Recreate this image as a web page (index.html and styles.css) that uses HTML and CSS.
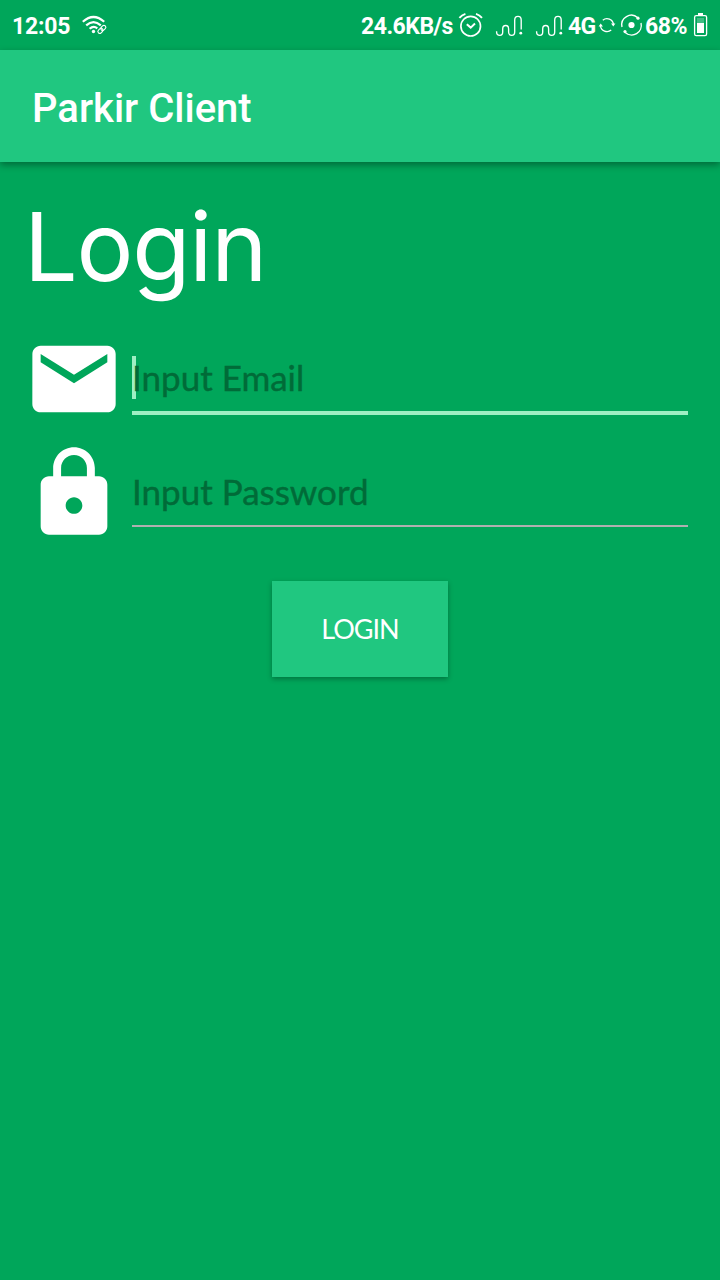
FILE: index.html
```html
<!DOCTYPE html>
<html lang="en">
<head>
<meta charset="utf-8">
<title>Parkir Client</title>
<link rel="stylesheet" href="styles.css">
</head>
<body>
<div class="status">
  <span class="time">12:05</span>
  <svg class="icon" width="30" height="50" viewBox="80 0 30 50" fill="none" stroke="#fff">
    <path d="M82.800 21.800Q93.500 12.200 104.200 21.800M86.200 25.400Q93.500 19 100.800 25.400M89.600 28.800Q93.500 25.200 97.300 28.300" stroke-width="2.2"/>
    <circle cx="93.5" cy="31.5" r="1.7" fill="#fff" stroke="none"/>
    <g transform="rotate(-45 101.8 29.3)" stroke-width="1.1"><rect x="97" y="27.5" width="5.6" height="3.8" rx="1.9"/><rect x="101" y="27.5" width="5.6" height="3.8" rx="1.9"/></g>
  </svg>
  <div class="right">
    <span class="rate">24.6KB/s</span>
    <svg class="icon" width="32" height="50" viewBox="458 0 32 50" fill="none" stroke="#fff" stroke-width="1.7">
      <circle cx="470.7" cy="26.2" r="9.8"/><path d="M466.8 24.2L470.7 27.6L475 23.5" stroke-width="2"/><path d="M459.4 17.8Q461.8 15 465.4 13.9M476 13.9Q479.6 15 482 17.8" stroke-width="1.9"/>
    </svg>
    <svg class="icon" width="40" height="50" viewBox="490 0 40 50" fill="none" stroke="#fff" stroke-width="1.35">
      <path d="M496.6 31.3V32Q496.6 35.4 499.8 35.4Q502.7 35.4 502.7 32V29Q502.7 25.5 505.7 25.5Q508.6 25.5 508.6 29V32Q508.6 35.4 511.7 35.4Q514.7 35.4 514.7 32V20Q514.7 16.4 518 16.4Q521.2 16.4 521.2 20V29.4"/><circle cx="520.8" cy="33.2" r="1.4" fill="#fff" stroke="none"/>
    </svg>
    <svg class="icon" width="37" height="50" viewBox="490 0 37 50" fill="none" stroke="#fff" stroke-width="1.35">
      <path d="M496.6 31.3V32Q496.6 35.4 499.8 35.4Q502.7 35.4 502.7 32V29Q502.7 25.5 505.7 25.5Q508.6 25.5 508.6 29V32Q508.6 35.4 511.7 35.4Q514.7 35.4 514.7 32V20Q514.7 16.4 518 16.4Q521.2 16.4 521.2 20V29.4"/><circle cx="520.8" cy="33.2" r="1.4" fill="#fff" stroke="none"/>
    </svg>
    <span class="net">4G</span>
    <svg class="icon" width="22" height="50" viewBox="597 0 22 50" fill="none" stroke="#fff" stroke-width="1.3">
      <path d="M602.8 20.200A6.500 6.500 0 0 1 613.500 24.500M611.200 30A6.500 6.500 0 0 1 600.500 25.700"/><path d="M611 23.400H615.400L613.300 26.400ZM598.600 26.600H603L600.700 23.600Z" fill="#fff" stroke="none"/>
    </svg>
    <svg class="icon" width="26" height="50" viewBox="619 0 26 50" fill="none" stroke="#fff" stroke-width="1.4">
      <path d="M622 27A9.600 9.600 0 0 1 637.800 17.700M641 23A9.600 9.600 0 0 1 625.200 32.400"/><circle cx="631.5" cy="25" r="3.1" fill="#fff" stroke="none"/><circle cx="638" cy="18.2" r="1.6" fill="#fff" stroke="none"/><circle cx="625" cy="31.6" r="1.6" fill="#fff" stroke="none"/>
    </svg>
    <span class="percent">68%</span>
    <svg class="icon" width="30" height="50" viewBox="690 0 30 50" fill="none">
      <rect x="694.6" y="15.6" width="12" height="20" rx="1.6" stroke="#fff" stroke-width="1.3"/><rect x="698" y="13" width="5" height="2.6" fill="#fff"/><rect x="697" y="18" width="7" height="5" fill="#40bc83"/><rect x="697" y="23" width="7" height="10" fill="#fff"/>
    </svg>
  </div>
</div>
<header class="appbar">Parkir Client</header>
<main class="content">
  <h1 class="title">Login</h1>
  <div class="row">
    <svg class="glyph" width="100" height="100" viewBox="0 0 24 24" fill="#fff"><path d="M20 4H4c-1.100 0-1.990.9-1.990 2L2 18c0 1.100.9 2 2 2h16c1.100 0 2-.9 2-2V6c0-1.100-.9-2-2-2zm0 4l-8 5-8-5V6l8 5 8-5v2z"/></svg>
    <div class="field focused"><span class="hint email">Input Email</span></div>
  </div>
  <div class="row second">
    <svg class="glyph lock" width="100" height="100" viewBox="0 0 24 24" fill="#fff"><path d="M18 8h-1V6c0-2.760-2.240-5-5-5S7 3.240 7 6v2H6c-1.100 0-2 .9-2 2v10c0 1.100.9 2 2 2h12c1.100 0 2-.9 2-2V10c0-1.100-.9-2-2-2zm-6 9c-1.100 0-2-.9-2-2s.9-2 2-2 2 .9 2 2-.9 2-2 2zm3.100-9H8.900V6c0-1.710 1.390-3.100 3.100-3.100s3.100 1.390 3.100 3.100v2z"/></svg>
    <div class="field"><span class="hint password">Input Password</span></div>
  </div>
  <button class="submit" type="button"><span>LOGIN</span></button>
</main>
</body>
</html>
```
FILE: styles.css
```css
* { box-sizing: border-box; }
body {
  margin: 0;
  min-height: 1280px;
  background: #00a65a;
  color: #fff;
  font-family: Roboto, sans-serif;
}
.status {
  display: flex;
  height: 50px;
  padding-left: 12px;
  font-size: 23px;
  font-weight: 700;
  line-height: 54px;
  white-space: nowrap;
}
.icon { display: block; flex: none; }
.time { width: 68px; letter-spacing: -.2px; }
.right { display: flex; margin-left: auto; }
.rate { width: 97px; letter-spacing: -.5px; }
.net { width: 30px; padding-left: 1px; letter-spacing: -.6px; }
.percent { width: 45px; letter-spacing: -.4px; }
.appbar {
  height: 112px;
  padding-left: 32px;
  background: #20c780;
  box-shadow: 0 3px 7px rgba(0, 0, 0, .36);
  font-size: 40px;
  font-weight: 500;
  line-height: 118px;
}
.content {
  display: flex;
  flex-direction: column;
  padding: 32px 32px 0 24px;
  font-family: Lato, sans-serif;
}
.title {
  height: 135px;
  margin: 0;
  font: 400 95px/106px Inter, sans-serif;
  letter-spacing: -1.2px;
}
.row {
  display: flex;
  height: 100px;
}
.second { margin-top: 12px; }
.glyph { display: block; flex: none; }
.lock { margin-top: 2px; }
.field {
  display: flex;
  flex: 1;
  height: 86px;
  margin-left: 8px;
  border-bottom: 2px solid #b0b0b0;
}
.focused { border-bottom: 4px solid #9eefc3; }
.hint {
  color: #006b38;
  font-size: 35px;
  line-height: 100px;
  -webkit-text-stroke: .4px #006b38;
}
.email { line-height: 96px; }
.focused::before {
  content: "";
  width: 4px;
  height: 43px;
  margin: 27px -4px 0 0;
  background: #9eefc3;
}
.submit {
  align-self: center;
  width: 176px;
  height: 96px;
  margin: 40px 0 0 8px;
  padding: 0;
  border: 0;
  background: #20c780;
  box-shadow: 0 2px 5px rgba(0, 0, 0, .3);
  color: #fff;
  font: 27px/96px Lato, sans-serif;
  letter-spacing: -1px;
}
```
